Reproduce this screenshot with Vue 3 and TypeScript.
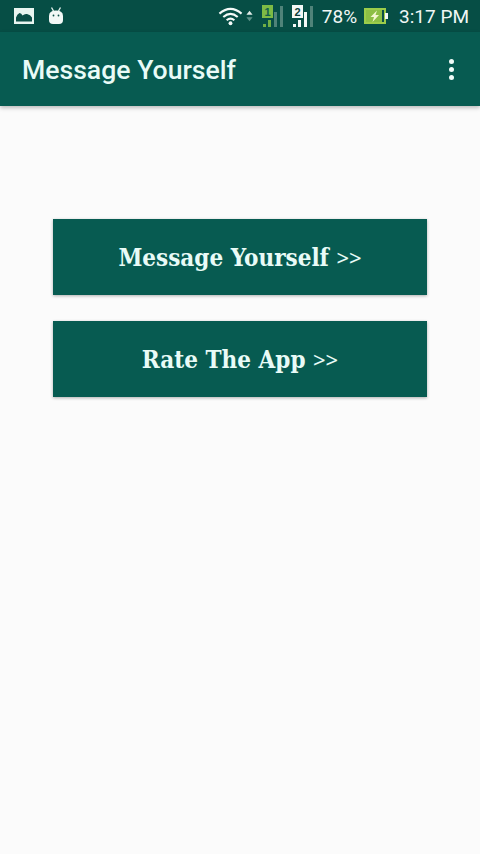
<script setup lang="ts">
const actions: string[] = ['Message Yourself', 'Rate The App']
</script>

<template>
  <div class="screen">
    <header class="status">
      <div class="status-left">
        <svg class="ic-pic" viewBox="0 0 20 16" width="20" height="16">
          <rect x="0" y="0" width="20" height="16" fill="#e8f5f0" />
          <path d="M2 13.5 V9.5 Q3 6 5.5 5 Q7.5 5 8.5 7.5 Q10.5 5.5 13 6 Q16.5 6.5 18 9.5 V13.5 Z" fill="#0b4f47" />
        </svg>
        <svg class="ic-bot" viewBox="0 0 16 18" width="16" height="18">
          <path d="M3.5 0.5 L5.5 4 M12.5 0.5 L10.5 4" stroke="#dfeee9" stroke-width="1.4" />
          <path d="M1 9 Q1 3.5 8 3.5 Q15 3.5 15 9 V13 Q15 17 11 17 H5 Q1 17 1 13 Z" fill="#f2f8f6" />
          <circle cx="5.5" cy="8.5" r="0.9" fill="#0b4f47" />
          <circle cx="10.5" cy="8.5" r="0.9" fill="#0b4f47" />
        </svg>
      </div>
      <div class="status-right">
        <svg class="ic-wifi" viewBox="0 0 26 20" width="25" height="20" fill="none" stroke="#f4faf8" stroke-width="2.2">
          <path d="M1.5 7.5 Q13 -2.5 24.5 7.5" />
          <path d="M5.5 11 Q13 4.5 20.5 11" />
          <path d="M9 14.5 Q13 11 17 14.5" />
          <circle cx="13" cy="17.5" r="2" fill="#f4faf8" stroke="none" />
        </svg>
        <svg class="ic-updown" viewBox="0 0 8 14" width="7" height="14">
          <path d="M4 1 L7.5 5.5 H0.5 Z" fill="#e0ece8" />
          <path d="M4 13 L7.5 8.5 H0.5 Z" fill="#5c9188" />
        </svg>
        <svg class="ic-sim" viewBox="0 0 22 22" width="22" height="22">
          <rect x="0" y="0" width="11" height="13" fill="#7dbb45" />
          <text x="5.5" y="10.5" class="sim-no sim-green">1</text>
          <rect x="1" y="19" width="3" height="3" fill="#6fae45" />
          <rect x="6" y="15" width="3" height="7" fill="#6fae45" />
          <rect x="12" y="7" width="3" height="15" fill="#4f8379" />
          <rect x="18" y="1" width="3" height="21" fill="#4f8379" />
        </svg>
        <svg class="ic-sim" viewBox="0 0 22 22" width="22" height="22">
          <rect x="0" y="0" width="11" height="13" fill="#f2f8f6" />
          <text x="5.5" y="10.5" class="sim-no sim-dark">2</text>
          <rect x="1" y="19" width="3" height="3" fill="#f2f8f6" />
          <rect x="6" y="15" width="3" height="7" fill="#f2f8f6" />
          <rect x="12" y="7" width="3" height="15" fill="#f2f8f6" />
          <rect x="18" y="1" width="3" height="21" fill="#4f8379" />
        </svg>
        <span class="pct">78%</span>
        <svg class="ic-batt" viewBox="0 0 25 16" width="25" height="16">
          <rect x="1" y="1" width="20" height="14" fill="#0b4f47" stroke="#9ccc4a" stroke-width="2" />
          <rect x="2" y="2" width="16" height="12" fill="#8dbf45" />
          <rect x="21" y="5" width="3" height="6" fill="#f2f8f6" />
          <path d="M13 2.5 L6.5 9 H10 L8.5 14 L15 7 H11.5 Z" fill="#f3f7d0" />
        </svg>
        <span class="time">3:17 PM</span>
      </div>
    </header>

    <nav class="toolbar">
      <h1 class="title">Message Yourself</h1>
      <div class="overflow" aria-label="More options">
        <span class="dot"></span>
        <span class="dot"></span>
        <span class="dot"></span>
      </div>
    </nav>

    <main class="content">
      <button v-for="a in actions" :key="a" class="action" type="button">
        {{ a }} <span class="chev">&gt;&gt;</span>
      </button>
    </main>
  </div>
</template>

<style>
html, body { margin: 0; padding: 0; background: #fbfbfb; }
</style>

<style scoped>
.screen {
  width: 480px;
  height: 854px;
  display: flex;
  flex-direction: column;
  background: #fbfbfb;
  overflow: hidden;
}
.status {
  height: 32px;
  flex: none;
  background: #064e45;
  display: flex;
  align-items: center;
  justify-content: space-between;
  padding: 0 11px 0 14px;
  color: #f0f7f5;
  font-family: Roboto, "Liberation Sans", sans-serif;
}
.status-left {
  display: flex;
  align-items: center;
  gap: 14px;
}
.ic-pic { width: 20px; height: 16px; }
.status-right {
  display: flex;
  align-items: center;
}
.ic-wifi { margin-right: 3px; }
.ic-updown { margin-right: 9px; }
.ic-sim { margin-right: 8px; }
.pct { font-size: 19px; margin-right: 7px; }
.ic-batt { margin-right: 10px; }
.time { font-size: 19px; }
.sim-no {
  font-family: "Liberation Sans", sans-serif;
  font-size: 11px;
  font-weight: 700;
  text-anchor: middle;
}
.sim-green { fill: #0f5f4c; }
.sim-dark { fill: #0b3f38; }
.toolbar {
  height: 74px;
  box-sizing: border-box;
  flex: none;
  background: #075b51;
  display: flex;
  align-items: center;
  justify-content: space-between;
  padding: 1px 26px 0 22px;
  box-shadow: 0 2px 4px rgba(0, 0, 0, 0.25);
  z-index: 1;
}
.title {
  margin: 0;
  font-family: Roboto, "Liberation Sans", sans-serif;
  font-weight: 500;
  font-size: 26.6px;
  color: #e9fbf7;
}
.overflow {
  display: flex;
  flex-direction: column;
  gap: 3px;
}
.dot {
  width: 5px;
  height: 5px;
  border-radius: 50%;
  background: #f0fbf8;
}
.content {
  flex: 1;
  display: flex;
  flex-direction: column;
  gap: 26px;
  padding: 113px 53px 0;
}
.action {
  height: 76px;
  border: 0;
  border-radius: 0;
  background: #075b51;
  color: #e9fbf7;
  font-family: "DejaVu Serif Condensed", "DejaVu Serif", serif;
  font-stretch: condensed;
  font-weight: 700;
  font-size: 24px;
  box-shadow: 0 1px 3px rgba(0, 0, 0, 0.3);
  padding: 0;
}
.chev {
  font-family: "Noto Sans", sans-serif;
  font-weight: 400;
  font-stretch: normal;
  font-size: 22px;
}
</style>
